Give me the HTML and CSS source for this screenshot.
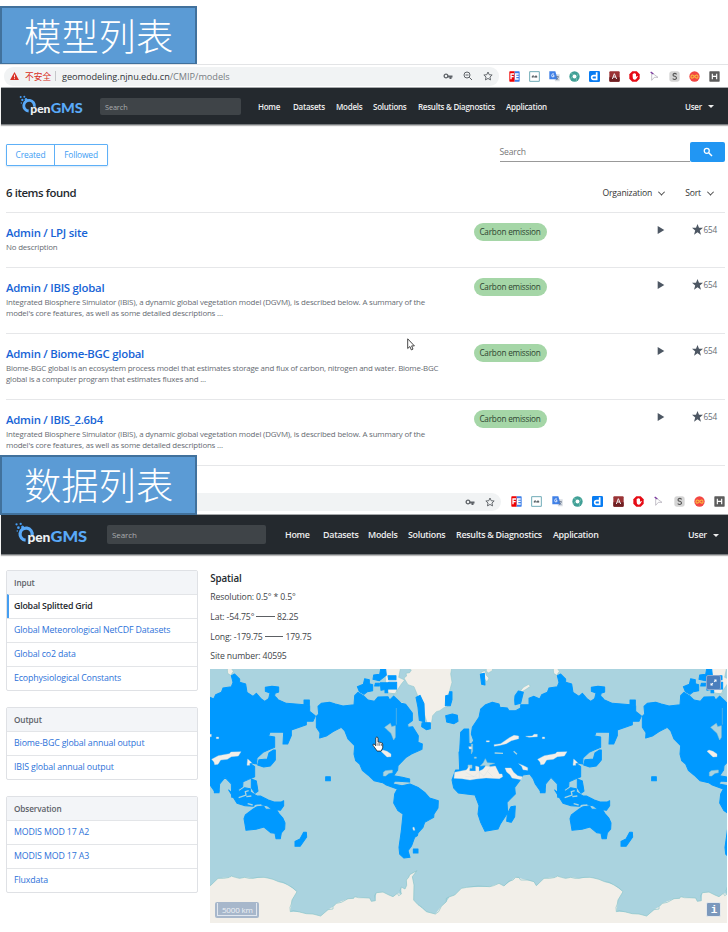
FILE: index.html
```html
<!DOCTYPE html>
<html lang="en">
<head>
<meta charset="utf-8">
<title>OpenGMS</title>
<link rel="stylesheet" href="styles.css">
</head>
<body>
<svg class="defs" width="0" height="0" aria-hidden="true">
  <defs>
    <symbol id="logo" viewBox="0 0 190 66">
      <g fill="#459df5"><circle cx="4" cy="6" r="3"/><circle cx="15" cy="5" r="3"/><circle cx="9" cy="15" r="3.5"/><circle cx="20" cy="13" r="4"/><circle cx="6" cy="24" r="2"/></g>
      <path d="M28 48A16 16 0 1 1 45 35" fill="none" stroke="#59a9f8" stroke-width="8.5"/><path d="M19 12l10 3-12 11z" fill="#59a9f8"/>
      <text x="33" y="53" textLength="60" lengthAdjust="spacingAndGlyphs" class="logo-pen">pen</text>
      <text x="94" y="53" textLength="96" lengthAdjust="spacingAndGlyphs" class="logo-gms">GMS</text>
    </symbol>
    <symbol id="key" viewBox="0 0 20 20"><circle cx="6" cy="10" r="3.7" fill="none" stroke="#5f6368" stroke-width="2.6"/><path d="M9 9h10v4h-2v3h-4v-3H9z" fill="#5f6368"/></symbol>
    <symbol id="zoomout" viewBox="0 0 20 20"><g fill="none" stroke="#5f6368" stroke-width="2"><circle cx="8" cy="8" r="6"/><path d="M12.5 12.5L18 18M5 8h6"/></g></symbol>
    <symbol id="star-o" viewBox="0 0 20 20"><path d="M10 2l2.4 5.4 5.9.6-4.4 4 1.2 5.8L10 14.9l-5.1 2.9L6.1 12 1.7 8l5.9-.6z" fill="none" stroke="#5f6368" stroke-width="1.9"/></symbol>
    <symbol id="star" viewBox="0 0 20 20"><path d="M10 0l2.7 7H20l-5.8 4.7 2.1 7.8L10 15l-6.3 4.5 2.1-7.8L0 7h7.3z" fill="#4d5763"/></symbol>
    <symbol id="play" viewBox="0 0 8 10"><path d="M.7 1v8l6.6-4z" fill="#4d5763"/></symbol>
    <symbol id="e1" viewBox="0 0 33 33"><path d="M3 1h14v31H3q-2 0-2-2V3q0-2 2-2z" fill="#f00000"/><path d="M17 1h13q2 0 2 2v27q0 2-2 2H17z" fill="#3d7fe8"/><path d="M6 25V9h9M6 17h8M29 9h-9v15h9M20 16h9" fill="none" stroke="#fff" stroke-width="4"/></symbol>
    <symbol id="e2" viewBox="0 0 33 33"><path d="M2 2h29v29H2z" fill="#fff" stroke="#70abb7" stroke-width="3"/><path d="M10 20v-5h5v5M19 20v-5h4v5" fill="none" stroke="#4b5358" stroke-width="3"/></symbol>
    <symbol id="e3" viewBox="0 0 33 33"><path d="M15 10h17v21H18z" fill="#d7dce3"/><path d="M1 1h18l7 24H1z" fill="#4181e7"/><path d="M15 9q-6-3-7 4t7 4v-4h-3" fill="none" stroke="#fff" stroke-width="2.3"/><path d="M20 17h10m-5-2v4m-4 8l8-8m-7 1l6 7" stroke="#6b778a" stroke-width="2"/></symbol>
    <symbol id="e4" viewBox="0 0 33 33"><circle cx="16.5" cy="16.5" r="15.5" fill="#409f96"/><circle cx="16.5" cy="16.5" r="6" fill="#fff"/><path d="M5 7l9 4M28 7l-4 9M4 25l6-9M22 31l1-10" stroke="#86cbb9" stroke-width="2"/></symbol>
    <symbol id="e5" viewBox="0 0 33 33"><rect width="33" height="33" rx="4" fill="#087cf2"/><path d="M23 4v21H13q-5 0-5-6 0-5 6-5h9" fill="none" stroke="#fff" stroke-width="5"/></symbol>
    <symbol id="e6" viewBox="0 0 33 33"><rect x="1" y="1" width="31" height="31" rx="3" fill="#9a3335"/><path d="M1 19h31v10q0 3-3 3H4q-3 0-3-3z" fill="#6f2023"/><path d="M10 24l6-16 7 16M12 18h9" fill="none" stroke="#eee" stroke-width="3"/></symbol>
    <symbol id="e7" viewBox="0 0 33 33"><path d="M10 1h13l9 9v13l-9 9H10l-9-9V10z" fill="#e60b15"/><path d="M11 17V9q2-2 3 0V7q2-2 3 0v1q2-2 4 1v9l3-3q3-1 2 2l-5 8q-5 3-9-2z" fill="#fff"/></symbol>
    <symbol id="e8" viewBox="0 0 33 33"><path d="M8 5v23l8-9h11z" fill="#fff" stroke="#a9a5b1" stroke-width="2"/><path d="M5 3l8 6" stroke="#7c38a0" stroke-width="4"/></symbol>
    <symbol id="e9" viewBox="0 0 33 33"><rect x="1" y="1" width="31" height="31" rx="8" fill="#d5d5d5"/><path d="M23 10q-5-5-10-1-3 5 4 7t5 7q-5 5-11 0" fill="none" stroke="#555" stroke-width="3.3"/></symbol>
    <symbol id="e10" viewBox="0 0 33 33"><circle cx="16.5" cy="16.5" r="15.5" fill="#f34643"/><path d="M16.5 16.5q-7-8-10-2-2 6 3 7 3 0 7-5 7-8 10-2 2 6-3 7-3 0-7-5z" fill="none" stroke="#f8b73e" stroke-width="3.5"/></symbol>
    <symbol id="e11" viewBox="0 0 33 33"><rect x="1" y="1" width="31" height="31" rx="2" fill="#5c5c5c"/><path d="M10 8v17M23 8v17M10 16h13" fill="none" stroke="#fff" stroke-width="3.5"/></symbol>
  </defs>
</svg>

<section class="models">
  <h1 class="banner">模型列表</h1>
  <div class="browser first">
    <div class="address">
      <svg class="warn" viewBox="0 0 20 18"><path d="M10 0l10 18H0z" fill="#d93025"/><path d="M10 6v6m0 2v2" stroke="#fff" stroke-width="2"/></svg>
      <span class="unsafe">不安全</span><i class="divider"></i>
      <span class="url">geomodeling.njnu.edu.cn<em>/CMIP/models</em></span>
      <span class="tools"><svg><use href="#key"/></svg><svg><use href="#zoomout"/></svg><svg><use href="#star-o"/></svg></span>
    </div>
    <div class="extensions"><svg><use href="#e1"/></svg><svg><use href="#e2"/></svg><svg><use href="#e3"/></svg><svg><use href="#e4"/></svg><svg><use href="#e5"/></svg><svg><use href="#e6"/></svg><svg><use href="#e7"/></svg><svg><use href="#e8"/></svg><svg><use href="#e9"/></svg><svg><use href="#e10"/></svg><svg><use href="#e11"/></svg></div>
  </div>
  <nav class="navbar small">
    <svg class="logo"><use href="#logo"/></svg>
    <span class="nav-search">Search</span>
    <div class="links"><a>Home</a><a>Datasets</a><a>Models</a><a>Solutions</a><a>Results &amp; Diagnostics</a><a>Application</a></div>
    <span class="user">User<i class="caret"></i></span>
  </nav>
  <div class="controls">
    <div class="tabs"><button>Created</button><button>Followed</button></div>
    <div class="search"><span>Search</span><button><svg viewBox="0 0 20 20"><circle cx="7.5" cy="7.5" r="5" fill="none" stroke="#fff" stroke-width="2.5"/><path d="M11.5 11.5L18 18" stroke="#fff" stroke-width="3"/></svg></button></div>
  </div>
  <div class="summary"><h2>6 items found</h2><div class="sort"><span>Organization</span><i class="chevron"></i><span>Sort</span><i class="chevron"></i></div></div>
  <ul class="list">
    <li class="short"><div class="info"><h3>Admin / LPJ site</h3><p>No description</p></div><span class="tag">Carbon emission</span><svg class="play"><use href="#play"/></svg><span class="stars"><svg><use href="#star"/></svg>654</span></li>
    <li><div class="info"><h3>Admin / IBIS global</h3><p>Integrated Biosphere Simulator (IBIS), a dynamic global vegetation model (DGVM), is described below. A summary of the<br>model's core features, as well as some detailed descriptions ...</p></div><span class="tag">Carbon emission</span><svg class="play"><use href="#play"/></svg><span class="stars"><svg><use href="#star"/></svg>654</span></li>
    <li><div class="info"><h3>Admin / Biome-BGC global</h3><p class="tight">Biome-BGC global is an ecosystem process model that estimates storage and flux of carbon, nitrogen and water. Biome-BGC<br>global is a computer program that estimates fluxes and ...</p></div><span class="tag">Carbon emission</span><svg class="play"><use href="#play"/></svg><span class="stars"><svg><use href="#star"/></svg>654</span></li>
    <li><div class="info"><h3>Admin / IBIS_2.6b4</h3><p>Integrated Biosphere Simulator (IBIS), a dynamic global vegetation model (DGVM), is described below. A summary of the<br>model's core features, as well as some detailed descriptions ...</p></div><span class="tag">Carbon emission</span><svg class="play"><use href="#play"/></svg><span class="stars"><svg><use href="#star"/></svg>654</span></li>
  </ul>
  <svg class="pointer" viewBox="0 0 8 13"><path d="M.7.8v9.7l2.2-2 1.4 3.4 1.7-.8-1.4-3.2h2.8z" fill="#fff" stroke="#333" stroke-width=".9"/></svg>
</section>

<section class="data">
  <h1 class="banner">数据列表</h1>
  <div class="browser second">
    <div class="address"><span class="tools"><svg><use href="#key"/></svg><svg><use href="#star-o"/></svg></span></div>
    <div class="extensions"><svg><use href="#e1"/></svg><svg><use href="#e2"/></svg><svg><use href="#e3"/></svg><svg><use href="#e4"/></svg><svg><use href="#e5"/></svg><svg><use href="#e6"/></svg><svg><use href="#e7"/></svg><svg><use href="#e8"/></svg><svg><use href="#e9"/></svg><svg><use href="#e10"/></svg><svg><use href="#e11"/></svg></div>
  </div>
  <nav class="navbar large">
    <svg class="logo"><use href="#logo"/></svg>
    <span class="nav-search">Search</span>
    <div class="links"><a>Home</a><a>Datasets</a><a>Models</a><a>Solutions</a><a>Results &amp; Diagnostics</a><a>Application</a></div>
    <span class="user">User<i class="caret"></i></span>
  </nav>
  <main class="content">
    <aside>
      <div class="menu"><h4>Input</h4><a class="active">Global Splitted Grid</a><a>Global Meteorological NetCDF Datasets</a><a>Global co2 data</a><a>Ecophysiological Constants</a></div>
      <div class="menu"><h4>Output</h4><a>Biome-BGC global annual output</a><a>IBIS global annual output</a></div>
      <div class="menu"><h4>Observation</h4><a>MODIS MOD 17 A2</a><a>MODIS MOD 17 A3</a><a>Fluxdata</a></div>
    </aside>
    <div class="spatial">
      <h3>Spatial</h3>
      <p>Resolution: 0.5° * 0.5°</p>
      <p>Lat: -54.75° <i class="dash"></i> 82.25</p>
      <p>Long: -179.75 <i class="dash"></i> 179.75</p>
      <p>Site number: 40595</p>
      <div class="map">
        <svg class="world" viewBox="16 15 1551 764" preserveAspectRatio="none">
          <defs>
            <g id="earth">
              <g class="land">
                <path d="M598 42L606 36 604 28 615 26 620 18 612 14V8H742L738 30 742 55 735 80 728 100 728 128 718 131 705 140 695 143 684 155 680 180 668 178 662 160 655 135 645 110 635 85 628 68 610 62z"/>
                <path d="M540 10H588L582 40 600 48 590 60 570 90 545 85zM68 15l10-5 8 12-8 12-9-6zM548 75h28v14h-26zM570 105l25 10 14 23-15-18-20-7z"/>
                <path d="M845 8h20l-2 12-12 7-6-6zM829 24l12-4 4 14 8 8-6 12-8-10-6-8zM948 80l8-10 16-9 5 6-13 9-12 7z"/>
                <path class="ice" d="M73 641L80 636 105 643 120 640 145 643 178 640 205 646 222 653 250 663 277 683 262 708 257 743 285 744 305 749 325 750 348 756 370 737 385 728 395 718 430 704 447 703 450 698 475 701 495 702 500 712 512 710 515 686 535 684 553 693 565 698 578 688 590 690 590 669 601 675 606 664 605 648 612 640 615 632 637 620 623 638 628 663 627 708 640 722 665 743 692 750 710 727 725 713 735 698 750 693 770 673 786 670 855 668 883 658 898 666 933 640 988 653 995 665 1018 643 1055 640V790H73z"/>
                <path class="coast" d="M75 640L80 636 92 640 105 643 120 640 133 643 145 643 160 640 178 640 190 642 205 646 222 653 236 655 250 663 264 671 277 683 262 708 260 720 256 730 257 743 266 740 285 744 305 749 325 750 348 756 370 737 385 735 385 728 395 718 410 715 430 704 447 703 450 698 462 701 475 701 495 702 500 712 512 710 510 695 515 686 535 684 553 693 565 698 578 688 582 695 590 690 586 680 590 669 601 675 606 664 605 648 612 640 615 632 637 620 623 638 628 663 627 708 640 722 652 730 665 743 692 750 702 743 710 727 725 713 725 703 735 698 750 693 770 673 786 670 820 666 855 668 867 665 883 658 898 666 912 652 925 648 933 640 942 640 948 648 970 648 988 653 995 665 1018 643 1035 643 1053 640"/>
              </g>
              <g class="sites">
                <path d="M340 127L350 118 375 115 392 120 415 126 448 122 450 95 460 85 476 95 490 108 509 112 520 99 550 98 555 108 567 96 590 118 603 121 623 147 623 170 609 180 610 190 624 188 641 215 640 235 653 240 652 256 620 270 603 281 580 305 579 318 567 335 593 340 615 345V354L570 351 565 360 592 365 616 360 640 370 660 385 675 402 701 410 700 432 688 450 687 460 660 475 655 490 640 507 638 515 630 520 621 545 610 560 616 580 598 582 585 570 583 550 590 500 595 450 580 440 567 417 570 390 578 375 545 363 534 356 508 350 490 333 473 319 465 300 453 290 448 270 450 245 430 225 420 200 410 190 385 203 365 216 345 222 346 206 335 190 335 157 342 150z"/>
                <path d="M458 68l18-7 4-17 14 3v12l10 3v18l-16 3-10 8-14-8zM507 33l18-2 3-16h15l2 18-21 17-19-4zM512 58h12v8h-14zM527 56h25v18l-23 5zM550 35h24v12h-22zM552 55h24v20h-24zM541 76h8v10h-8zM577 125l18 3 10 15-20 13zM634 100l12-6 12 25 2 55-16-5-4-39zM652 176h25v18l-12 3-14-9zM723 95l10-2 2-10h7v24l-5 18h-15zM723 155l20-5 15 4 2 18-12 7-22-5zM363 338h14v12h-14zM626 555h14v12h-14z"/>
                <path d="M768 205L778 195H792L793 238 783 250 765 260zM803 190L823 160 828 135 843 122 863 115 883 120 886 130 908 132 913 140 933 140 948 132V122H973V103L988 97 1005 105 1011 92 1028 85 1033 72 1058 68 1063 55 1058 35 1068 30 1083 45V55L1101 60 1105 85 1123 97 1133 88 1148 105 1158 112 1183 95 1193 105 1223 118 1278 122 1293 125V142L1310 156 1303 172H1283V182L1238 198V215L1227 240H1213L1215 205 1174 204 1170 216 1188 219V250L1168 258 1153 265 1135 282 1134 300 1110 295 1128 308V338L1110 346 1093 353 1092 368 1080 376 1080 400H1059L1058 360 1039 340 1023 360 1021 383 1010 385 992 360 986 345 975 330 955 333 945 350 930 370 932 390 907 415 909 446 887 480 880 495 841 502 828 475 820 450 823 425 811 393 785 390 761 387 747 372 742 348 753 318 765 318 763 265 780 235 800 240 807 230 800 210z"/>
                <path d="M1185 258h5v30l-15 18-20 3-18-6 4-16 25-2 5-18zM931 95l10-14 15 4-8 33-17 4-1-15zM1160 70l20-3 20 2v15l-11 4-1 8 8 8h-26l4-17-14-5zM1276 108h16v15h-16zM827 31l12-3 2 35-10-2zM919 428l13-2-2 32-10 17-14-3 2-22zM1007 378h14v8h-14zM1118 345l15 6 5 30-9 7-11-17zM1050 378l12 10 20-6 16-11 17 3v10l20 12 10 0 24 12 17 6h22l7-4v15l-10 14-25-3-15-11-31-5-10 7-25-2-24-7z"/>
                <path d="M1119 435l11-7 20-2 6 10h17l4 -10 4 1 7 9 7 12 13 15 6 14-1 18-10 12-3 17h-13l-3-16-13-2-20-17-24 7-30 3-3-18-3-17 4-11zM1270 505h8l1 14-20 28h-15v-15l15-7z" transform="translate(5 0)"/>
              </g>
              <g class="water">
                <path d="M540 190l17-12 4 10 11-3v35l-5 8-8-20-13-12zM575 132v50M536 325l6-5 21-2v8l-10 2-10 8h-7zM800 240h4v22l-4 8zM790 303v10h12v-10zM836 296l6-12 6 12 22 2-16 5 3 12-10-1-6-10-14 2zM809 279h6v4h-6z"/>
                <path class="thin" d="M1080 401l22-8-2-10 10-3M1107 419l15 4M1103 398l15-2M1128 425l20-2M870 267l25 1M927 262l10 9M1045 441l10 3 18 0"/>
              </g>
              <g class="land dry">
                <path d="M785 318l10-12v15h18v-15l10 3v13l12-6 8-10 13 2 16-2 12 24 8 0 2 8-10 6-40-2-30 3-18 3-24-4-24-1 2-18zM901 312l18 0 8 13 12 10 14 3-3 9-28-5-6-10-10-8zM868 242l20-3 26-18 14-7 14 2v8l-22 6-15 9-18 5-18 3zM963 217l20-1 5-5h10v7l-25 2zM999 286l20-11 33-6 5-5 30-1-8 13-21 2-12 8-20 2-8 13-10 1-2-8zM1107 285l6 5 6 6-6 2v6h-8zM942 299l15 6 12 6v8l-14-2-4-10zM792 248h9v7h-7zM529 262l6-4 12 4 12 8v8l-12 1zM624 491l4-2 3 10h-5zM845 230h9v4h-9zM1013 219h7v5h-7z"/>
                <path class="borders" d="M783 325l25 13 15-15 15 14 20-29M824 325v18m25-20l15 15m-82 0l36 1"/>
              </g>
            </g>
          </defs>
          <rect x="0" y="0" width="1600" height="800" fill="#aad3df"/>
          <use href="#earth" x="-978"/><use href="#earth"/><use href="#earth" x="978"/>
        </svg>
        <button class="expand"><svg viewBox="0 0 14 14"><path d="M8 1h5v5l-1.5-1.5-2 2-2-2 2-2zM1 8l1.5 1.5 2-2 2 2-2 2L6 13H1z" fill="#fff"/></svg></button>
        <span class="scale"><span>5000 km</span></span>
        <button class="about">i</button>
        <svg class="hand" viewBox="0 0 13 18"><path d="M4 11V2q1.4-2 2.5 0v5q1.3-1 2 .3 1.3-.6 1.8.6 1.5-.4 1.5 1.2v4.3L10 17H5.6L2 12q-2-2-1-2.8 1.2-.9 3 1.8z" fill="#fff" stroke="#222" stroke-width=".9"/><path d="M6.5 8v3m2-3v3m2-2v2" stroke="#222" stroke-width=".7"/></svg>
      </div>
    </div>
  </main>
</section>
</body>
</html>
```
FILE: styles.css
```css
* { box-sizing: border-box; }
body { margin: 0; width: 728px; height: 932px; overflow: hidden; background: #fff; color: #333; font-family: "Open Sans", "Noto Sans CJK SC", sans-serif; font-size: 8px; }
h1, h2, h3, h4, p, ul { margin: 0; padding: 0; }
button { font: inherit; padding: 0; letter-spacing: inherit; }
svg { display: block; flex: none; }
.defs { position: absolute; }
.models { height: 455px; padding-top: 6px; position: relative; }
.banner { width: 197px; height: 59px; border: 2px solid #41719c; background: #5b9bd5; color: #fff; font: 300 37.3px/55px "Noto Sans CJK SC", sans-serif; padding-left: 22px; white-space: nowrap; }

.browser { display: flex; align-items: center; }
.first { height: 23px; border-top: 1px solid #e3e4e6; margin-top: -1px; }
.first .address { width: 495px; height: 19px; margin: 0 0 0 4px; border-radius: 9px; padding-left: 6px; }
.address { background: #f1f3f4; display: flex; align-items: center; }
.warn { width: 9px; height: 8px; }
.unsafe { color: #d93025; font: 8.7px "Noto Sans CJK SC", sans-serif; margin-left: 6px; width: 27px; white-space: nowrap; }
.divider { width: 1px; height: 10px; background: #c5c7ca; margin: 0 6px 0 3px; }
.url { font-size: 9.2px; color: #303338; white-space: nowrap; letter-spacing: -.04px; }
.url em { font-style: normal; color: #777c82; }
.tools { display: flex; margin-left: auto; gap: 10px; margin-right: 6px; }
.tools svg { width: 10px; height: 10px; }
.extensions { display: flex; }
.extensions svg { width: 11px; height: 11px; }
.first .extensions { gap: 9.1px; margin-left: 9.5px; }

.navbar { background: #24292e; color: #eee; margin-left: 1px; display: flex; align-items: center; border-top: 1px solid #a7aaac; border-bottom: 1px solid #777b7e; box-shadow: 0 1px 1px #bbb; font-weight: 600; }
.small { height: 38px; font-size: 8px; letter-spacing: -.26px; }
.logo-pen { font: 900 33px Lato, sans-serif; fill: #eef2f5; }
.logo-gms { font: 900 38px Lato, sans-serif; fill: #59a9f8; }
.small .logo { width: 64px; height: 22px; margin-left: 18px; }
.nav-search { background: #3f4448; border-radius: 2px; color: #aaacae; font-weight: 400; letter-spacing: -.1px; }
.small .nav-search { width: 141px; height: 17px; line-height: 18px; margin-left: 17px; padding-left: 5px; font-size: 7.3px; }
.links { display: grid; white-space: nowrap; }
.small .links { grid-template-columns: 35px 43px 37px 45px 88px 179px; margin-left: 17px; }
.user { display: flex; align-items: center; }
.caret { border: 3px solid transparent; border-top-color: #eee; border-bottom: 0; margin-left: 6px; margin-top: 1px; }

.controls { height: 57px; padding: 18.5px 3px 0 6px; display: flex; justify-content: space-between; align-items: flex-start; }
.tabs { display: flex; border: 1px solid #5eb0f7; border-radius: 1px; width: 102px; height: 22px; box-shadow: 0 1px 2px #d8e7f4; }
.tabs button { border: 0; background: none; color: #3d9cf3; width: 47px; font-size: 8.4px; letter-spacing: -.15px; }
.tabs button + button { border-left: 1px solid #5eb0f7; width: 53px; }
.search { display: flex; width: 225.5px; height: 20px; margin-top: -1.5px; }
.search span { flex: 1; border-bottom: 1px solid #999; color: #777; line-height: 20px; font-size: 8.6px; letter-spacing: -.15px; }
.search button { width: 35px; border: 0; background: #2196f3; border-radius: 2px; display: grid; place-items: center; }
.search svg { width: 10px; height: 10px; }
.summary { height: 29px; margin-left: 6px; display: flex; justify-content: space-between; align-items: center; padding-bottom: 7px; }
.summary h2 { font-size: 11.4px; font-weight: 600; line-height: 16px; letter-spacing: -.42px; color: #24292e; }
.sort { display: flex; align-items: center; font-size: 8.6px; letter-spacing: -.15px; padding-right: 14px; }
.chevron { width: 5px; height: 5px; border: solid #444; border-width: 0 1.3px 1.3px 0; transform: rotate(45deg) translate(-1px,-1px); margin: 0 21px 0 7px; }
.chevron:last-child { margin-right: 1px; }
.list { list-style: none; margin: 1px 3px 0 6px; border-top: 1px solid #e6e7e9; }
.list li { height: 66px; border-bottom: 1px solid #e6e7e9; display: flex; align-items: flex-start; }
.list .short { height: 55px; }
.info { width: 467.5px; padding-top: 12px; white-space: nowrap; }
.info h3 { font-size: 11.4px; line-height: 16px; font-weight: 600; letter-spacing: -.26px; color: #1764d6; }
.info p { font-size: 7.9px; line-height: 11.5px; color: #666b72; letter-spacing: -.175px; padding-top: .5px; }
.info .tight { letter-spacing: -.2px; }
.tag { width: 73px; height: 18px; border-radius: 9px; background: #a5d6a7; margin-top: 10px; line-height: 17.5px; text-align: center; font-size: 8.2px; letter-spacing: -.2px; color: #2d4430; white-space: nowrap; }
.play { width: 8px; height: 10px; margin: 11.5px 0 0 110.5px; }
.stars { margin: 10px 0 0 26.5px; display: flex; align-items: center; height: 12px; font-size: 8.2px; letter-spacing: -.2px; color: #666c73; gap: 1px; }
.stars svg { width: 11px; height: 11px; }
.pointer { position: absolute; left: 407px; top: 338px; width: 8px; height: 13px; }

.data .banner { height: 60px; position: relative; z-index: 1; }
.second { height: 26px; margin-top: -27px; }
.second .address { width: 305px; height: 18px; margin: 1px 0 0 196px; border-radius: 0 9px 9px 0; }
.second .extensions { gap: 9.35px; margin: 1px 0 0 10px; }
.large { height: 41px; font-size: 8.9px; letter-spacing: -.26px; }
.large .logo { width: 74px; height: 25px; margin-left: 13px; }
.large .nav-search { width: 159px; height: 19px; line-height: 19px; margin-left: 19px; padding-left: 5px; font-size: 8px; }
.large .links { grid-template-columns: 38px 45px 40px 48px 97px 135px; margin-left: 19px; }
.content { display: flex; align-items: flex-start; padding: 15px 0 0 6px; }
aside { width: 192px; }
.menu { border: 1px solid #dfe1e5; border-radius: 2px; margin-bottom: 15.7px; }
.menu h4 { background: #f3f5f8; height: 23px; line-height: 23px; padding-left: 7px; font-size: 8.2px; font-weight: 600; letter-spacing: -.1px; color: #5c6168; }
.menu a { display: block; height: 24.1px; line-height: 23px; border-top: 1px solid #e3e5e8; padding-left: 7px; font-size: 8.8px; letter-spacing: -.13px; color: #2d72d9; white-space: nowrap; }
.menu .active { color: #24292e; font-weight: 600; border-left: 2px solid #459ef1; padding-left: 5px; letter-spacing: -.2px; }
.spatial { width: 518px; margin-left: 12.5px; padding-top: 1.5px; font-size: 8.7px; letter-spacing: -.15px; color: #414449; }
.spatial h3 { font-size: 9.8px; line-height: 14px; font-weight: 600; margin-bottom: 2.5px; color: #24292e; }
.spatial p { height: 19.8px; line-height: 19.8px; white-space: nowrap; }
.dash { display: inline-block; width: 18.5px; height: 1px; background: #5c5f63; vertical-align: 3px; }
.map { height: 254.7px; position: relative; margin-top: 1.5px; overflow: hidden; width: 517px; }
.world { width: 517px; height: 254.7px; }
.land path { fill: #f2efe9; stroke: #88c4c9; stroke-width: 1.5; }
.land .ice { stroke: none; }
.land .coast { fill: none; stroke-width: 2; }
.land.dry path { stroke: #cbdce4; stroke-width: 1; }
.land .borders { fill: none; stroke: #dfc5dc; stroke-width: 2; }
.sites path { fill: #0099ff; stroke: #0099ff; stroke-width: 3; stroke-linejoin: round; }
.water path { fill: #aad3df; stroke: #8ec3d0; stroke-width: 1.5; }
.water .thin { fill: none; stroke: #aad3df; stroke-width: 4; }
.expand, .about { position: absolute; right: 6px; width: 15px; height: 15px; border: 1px solid #8ca8d0; border-radius: 2px; background: #4b7ebd; color: #fff; }
.expand { top: 6px; }
.expand svg { width: 7px; height: 7px; margin: auto; }
.about { bottom: 6px; background: #7b98bc; border-color: #e4e8ec; font: 700 11px/12px "Liberation Mono", monospace; }
.scale { position: absolute; left: 5px; bottom: 5px; width: 44px; height: 16px; border-radius: 2px; background: #a7b7cb; padding: 1px 2px 2px; }
.scale span { display: block; height: 13px; border: 1px solid #e1e7ef; border-top: 0; color: #eef1f5; font-size: 8px; line-height: 13px; text-align: center; }
.hand { position: absolute; left: 162px; top: 67px; width: 12px; height: 16px; }
```
